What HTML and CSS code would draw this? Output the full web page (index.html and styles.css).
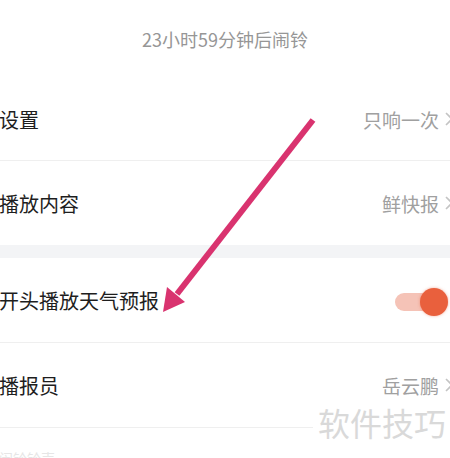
FILE: index.html
```html
<!DOCTYPE html>
<html lang="zh">
<head>
<meta charset="utf-8">
<link rel="stylesheet" href="styles.css">
</head>
<body>
<div class="page">
  <div class="header">23小时59分钟后闹铃</div>
  <div class="row r1">
    <span class="label">设置</span>
    <span class="value">只响一次<svg class="chev" width="10" height="16" viewBox="0 0 10 16"><path d="M2 2 L8 8 L2 14" fill="none" stroke="#c4c4c4" stroke-width="1.6"/></svg></span>
  </div>
  <div class="divider"></div>
  <div class="row">
    <span class="label">播放内容</span>
    <span class="value">鲜快报<svg class="chev" width="10" height="16" viewBox="0 0 10 16"><path d="M2 2 L8 8 L2 14" fill="none" stroke="#c4c4c4" stroke-width="1.6"/></svg></span>
  </div>
  <div class="band"></div>
  <div class="row">
    <span class="label">开头播放天气预报</span>
    <span class="toggle"><span class="track"></span><span class="knob"></span></span>
  </div>
  <div class="divider"></div>
  <div class="row">
    <span class="label">播报员</span>
    <span class="value">岳云鹏<svg class="chev" width="10" height="16" viewBox="0 0 10 16"><path d="M2 2 L8 8 L2 14" fill="none" stroke="#c4c4c4" stroke-width="1.6"/></svg></span>
  </div>
  <div class="divider"></div>
  <div class="row r5">
    <span class="label faint">闹铃铃声</span>
  </div>
  <div class="watermark">软件技巧</div>
  <svg class="arrow" width="450" height="458" viewBox="0 0 450 458">
    <line x1="313" y1="120" x2="177" y2="294" stroke="#d9336f" stroke-width="6" stroke-linecap="butt"/>
    <polygon points="163,312 185,302 167,287" fill="#d9336f"/>
  </svg>
</div>
</body>
</html>
```

FILE: styles.css
```css
html, body {
  margin: 0;
  padding: 0;
  background: #ffffff;
  overflow: hidden;
}
.page {
  position: relative;
  width: 450px;
  height: 458px;
  overflow: hidden;
  font-family: "Noto Sans CJK SC", "Noto Sans", sans-serif;
}
.header {
  height: 78px;
  display: flex;
  align-items: center;
  justify-content: center;
  font-size: 18px;
  color: #969696;
}
.row {
  height: 84px;
  display: flex;
  align-items: center;
  justify-content: space-between;
}
.r1 {
  height: 82px;
}
.label {
  font-size: 20px;
  color: #1e1e1e;
  margin-left: -1px;
}
.faint {
  color: #e6e6e6;
  font-size: 14px;
  align-self: flex-start;
  margin-top: 20px;
}
.value {
  display: flex;
  align-items: center;
  font-size: 19px;
  color: #a0a0a0;
  margin-right: -4px;
}
.chev {
  margin-left: 5px;
}
.divider {
  height: 1px;
  background: #efefef;
}
.band {
  height: 13px;
  background: #f3f4f6;
}
.toggle {
  position: relative;
  width: 53px;
  height: 28px;
  margin-right: 2px;
  margin-top: 4px;
}
.track {
  position: absolute;
  left: 0;
  top: 5px;
  width: 46px;
  height: 18px;
  border-radius: 9px;
  background: #f5c3b7;
}
.knob {
  position: absolute;
  right: 0;
  top: 0;
  width: 28px;
  height: 28px;
  border-radius: 50%;
  background: #e9603d;
  box-shadow: 0 0 3px rgba(233, 96, 61, 0.5);
}
.watermark {
  position: absolute;
  left: 313px;
  top: 402px;
  padding: 0 5px;
  background: #ffffff;
  font-size: 32px;
  line-height: 40px;
  color: #d9d9d9;
  white-space: nowrap;
}
.arrow {
  position: absolute;
  left: 0;
  top: 0;
}
```
